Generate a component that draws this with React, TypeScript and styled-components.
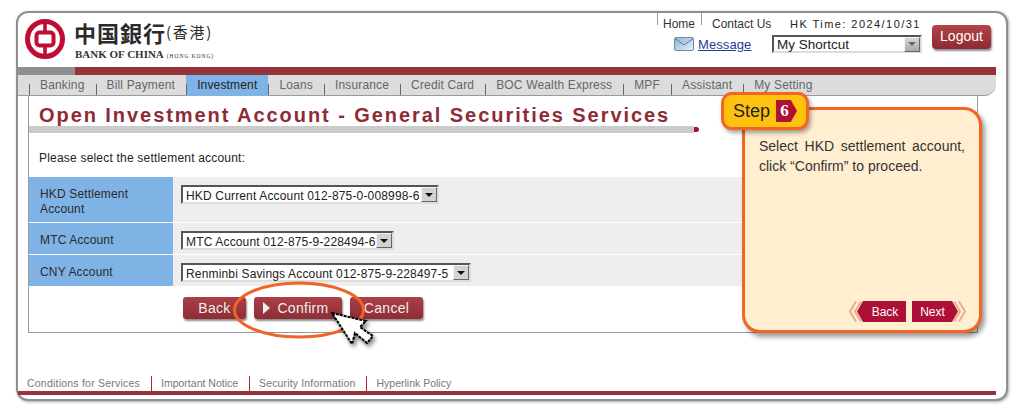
import React from 'react';
import styled, { createGlobalStyle } from 'styled-components';

const GlobalStyle = createGlobalStyle`
  html, body {
    margin: 0;
    padding: 0;
    background: #fff;
    font-family: "Liberation Sans", Arial, sans-serif;
  }
`;

const Page = styled.div`
  width: 1024px;
  height: 415px;
  padding: 11px 16px 14px;
  box-sizing: border-box;
  overflow: hidden;
`;

const Frame = styled.div`
  position: relative;
  height: 390px;
  box-sizing: border-box;
  border: 2px solid #8f8f8f;
  border-radius: 12px;
  box-shadow: 1px 1px 3px rgba(0, 0, 0, 0.35);
  display: flex;
  flex-direction: column;
  background: #fff;
`;

const Header = styled.header`
  height: 54px;
  padding-right: 16px;
  display: flex;
  flex-shrink: 0;
`;

const Brand = styled.div`
  display: flex;
  padding: 6px 0 0 7px;
  gap: 9px;
`;

const BrandText = styled.div`
  display: flex;
  flex-direction: column;
`;

const BrandChinese = styled.div`
  display: flex;
  align-items: center;
  height: 26px;
  color: #2b2b2b;
  font-family: "Noto Sans CJK TC", sans-serif;
  font-size: 22px;
  font-weight: 700;
  letter-spacing: 1px;
  line-height: 26px;
  white-space: nowrap;
`;

const BrandRegion = styled.span`
  font-size: 15px;
  font-weight: 400;
  letter-spacing: 1.75px;
`;

const BrandEnglish = styled.div`
  display: flex;
  align-items: baseline;
  gap: 3px;
  margin: 2px 0 0 1px;
  color: #333;
  font-family: "Liberation Serif", serif;
  font-size: 11px;
  font-weight: 700;
  line-height: 14px;
  white-space: nowrap;
`;

const BrandEnglishSmall = styled.span`
  font-size: 5.5px;
  font-weight: 400;
  letter-spacing: 0.95px;
`;

const HeaderRight = styled.div`
  margin-left: auto;
  width: 333px;
  display: flex;
`;

const Utility = styled.div`
  width: 274px;
  display: flex;
  flex-direction: column;
`;

const TopLinks = styled.div`
  display: flex;
  height: 22px;
`;

const TopLink = styled.a<{ $width: number; $indent: number }>`
  display: block;
  box-sizing: border-box;
  width: ${(p) => p.$width}px;
  height: 12px;
  padding: 4px 0 0 ${(p) => p.$indent}px;
  border-left: 1px solid #999;
  color: #333;
  font-size: 12px;
  line-height: 14px;
  white-space: nowrap;
`;

const Clock = styled.div`
  margin-left: 19px;
  padding-top: 4px;
  color: #222;
  font-size: 11px;
  line-height: 14px;
  letter-spacing: 1.45px;
  white-space: nowrap;
`;

const ToolRow = styled.div`
  display: flex;
  align-items: center;
  height: 18px;
`;

const MailIcon = styled.svg`
  margin-left: 17px;
  flex-shrink: 0;
`;

const MessageLink = styled.a`
  margin-left: 4px;
  width: 74px;
  color: #1c3f8f;
  font-size: 13px;
  letter-spacing: 0.1px;
  text-decoration: underline;
`;

const ComboBox = styled.div<{ $width: number; $height?: number }>`
  display: flex;
  align-items: center;
  box-sizing: border-box;
  width: ${(p) => p.$width}px;
  height: ${(p) => p.$height ?? 19}px;
  background: #fff;
  border: 2px solid;
  border-color: #555 #ddd #ddd #555;
  white-space: nowrap;
`;

const ComboText = styled.span<{ $shortcut?: boolean }>`
  flex: 1;
  padding: ${(p) => (p.$shortcut ? 1 : 3)}px 0 0 3px;
  color: #222;
  font-size: ${(p) => (p.$shortcut ? 13.5 : 12)}px;
  line-height: 14px;
  letter-spacing: ${(p) => (p.$shortcut ? 0 : 0.16)}px;
`;

const ComboArrow = styled.span<{ $grey?: boolean }>`
  display: flex;
  align-items: center;
  justify-content: center;
  width: 16px;
  height: 15px;
  flex-shrink: 0;
  box-sizing: border-box;
  background: ${(p) => (p.$grey ? 'linear-gradient(#d8d8d8, #a8a8a8)' : '#d6d3cc')};
  border: 1px solid;
  border-color: #f4f4f4 #666 #666 #f4f4f4;

  &::after {
    content: '';
    border-left: 4px solid transparent;
    border-right: 4px solid transparent;
    border-top: 4px solid ${(p) => (p.$grey ? '#666' : '#111')};
  }
`;

const LogoutSlot = styled.div`
  padding: 12px 0 0 10px;
`;

const LogoutButton = styled.button`
  display: block;
  width: 59px;
  height: 24px;
  padding: 0 0 3px;
  border: 0;
  border-radius: 4px;
  background: linear-gradient(#b24349, #8e2a32);
  box-shadow: 1px 2px 2px rgba(0, 0, 0, 0.45);
  color: #fff;
  font: 14px "Liberation Sans", Arial, sans-serif;
`;

const AccentBar = styled.div`
  display: grid;
  grid-template-columns: 57px 1fr;
  height: 8px;
  margin-right: 10px;
  flex-shrink: 0;
  background: #96323a;

  &::before {
    content: '';
    background: #8f8f8f;
  }
`;

const Nav = styled.nav`
  display: flex;
  height: 21px;
  box-sizing: border-box;
  margin-right: 10px;
  padding-left: 11px;
  flex-shrink: 0;
  background: #dcdcdc;
  border-bottom: 1px solid #9a9a9a;
  border-bottom-right-radius: 12px;
`;

const NavItem = styled.a<{ $active?: boolean }>`
  position: relative;
  padding: 0 11px;
  height: 21px;
  background: ${(p) => (p.$active ? '#7fb2e5' : 'transparent')};
  color: ${(p) => (p.$active ? '#222' : '#666')};
  font-size: 12px;
  line-height: 20px;
  letter-spacing: 0.16px;
  white-space: nowrap;

  &::before {
    content: '';
    position: absolute;
    left: 0;
    bottom: 1px;
    height: 11px;
    border-left: 1px solid #666;
  }
`;

const Panel = styled.main`
  height: 237px;
  width: 950px;
  box-sizing: border-box;
  margin-left: 10px;
  flex-shrink: 0;
  border: 1px solid #999;
  border-top: 0;
`;

const Title = styled.h1`
  margin: 0;
  height: 30px;
  padding-left: 10px;
  color: #8e2b36;
  font-size: 20px;
  font-weight: 700;
  line-height: 39px;
  letter-spacing: 1.94px;
  white-space: nowrap;
`;

const TitleRule = styled.div`
  display: flex;
  align-items: center;
  height: 7px;
  width: 670px;

  &::before {
    content: '';
    flex: 1;
    height: 7px;
    background: #cbcbcb;
  }

  &::after {
    content: '';
    width: 5px;
    height: 5px;
    border-radius: 0 3px 3px 0;
    background: #a5132f;
  }
`;

const Prompt = styled.p`
  margin: 0;
  height: 44px;
  box-sizing: border-box;
  padding: 18px 0 0 10px;
  color: #222;
  font-size: 12px;
  line-height: 14px;
  letter-spacing: 0.2px;
`;

const FormGrid = styled.div`
  display: grid;
  grid-template-columns: 144px 1fr;
  grid-template-rows: 45px 31px 31px;
  row-gap: 1px;
`;

const FieldLabel = styled.div`
  box-sizing: border-box;
  padding: 10px 10px 0 11px;
  background: #7fb2e5;
  color: #2c2c2c;
  font-size: 12px;
  line-height: 15px;
  letter-spacing: 0.15px;
`;

const FieldValue = styled.div`
  padding: 8px 0 0 8px;
  background: #eeeeee;
`;

const ButtonRow = styled.div`
  display: flex;
  gap: 8px;
  padding: 11px 0 0 154px;
`;

const ActionButton = styled.button<{ $width: number; $lead?: boolean }>`
  display: flex;
  align-items: center;
  justify-content: center;
  gap: 7px;
  width: ${(p) => p.$width}px;
  height: 22px;
  padding: 0 ${(p) => (p.$lead ? 4 : 0)}px 0 0;
  border: 0;
  border-radius: 3px;
  background: linear-gradient(#ac4047, #8e2c34);
  box-shadow: 1px 2px 2px rgba(0, 0, 0, 0.45);
  color: #eee;
  font: 14px "Liberation Sans", Arial, sans-serif;
  letter-spacing: 0.3px;
`;

const PlayMark = styled.span`
  border-top: 6px solid transparent;
  border-bottom: 6px solid transparent;
  border-left: 7px solid #eee;
`;

const Footer = styled.footer`
  margin: auto 10px 4px 0;
  border-bottom: 4px solid #96323a;
  padding-left: 9px;
  display: flex;
`;

const FooterLink = styled.a<{ $tracking: number }>`
  height: 15px;
  padding-right: 11px;
  margin-right: 9px;
  border-right: 1px solid #96323a;
  color: #777;
  font-size: 10.5px;
  line-height: 15px;
  letter-spacing: ${(p) => p.$tracking}px;
  white-space: nowrap;

  &:last-child {
    border-right: 0;
  }
`;

const Highlight = styled.svg`
  position: absolute;
  left: 214px;
  top: 267px;
`;

const Pointer = styled.svg`
  position: absolute;
  left: 313px;
  top: 299px;
  filter: drop-shadow(2px 3px 2px rgba(0, 0, 0, 0.5));
`;

const Callout = styled.aside`
  position: absolute;
  left: 724px;
  top: 94px;
  width: 240px;
  height: 226px;
  box-sizing: border-box;
  display: flex;
  flex-direction: column;
  padding: 26px 13px 8px 14px;
  background: #ffefd0;
  border: 3px solid #f26522;
  border-radius: 18px;
  box-shadow: 3px 4px 5px rgba(0, 0, 0, 0.4);
`;

const StepBadge = styled.div`
  position: absolute;
  left: -24px;
  top: -18px;
  width: 88px;
  height: 38px;
  box-sizing: border-box;
  display: flex;
  align-items: center;
  gap: 6px;
  padding-left: 9px;
  background: #ffc20e;
  border: 3px solid #f26522;
  border-radius: 11px;
  box-shadow: 2px 3px 4px rgba(0, 0, 0, 0.35);
  color: #222;
  font-size: 18px;
`;

const StepNumber = styled.span`
  width: 21px;
  height: 22px;
  padding-right: 4px;
  box-sizing: border-box;
  background: #ae0f36;
  clip-path: polygon(0 0, 70% 0, 100% 50%, 70% 100%, 0 100%);
  color: #fff;
  font-family: "Liberation Serif", serif;
  font-size: 17px;
  font-weight: 700;
  line-height: 22px;
  text-align: center;
`;

const CalloutText = styled.p`
  margin: 0;
  width: 206px;
  color: #333;
  font-size: 14px;
  line-height: 20px;
  text-align: justify;
`;

const GuideNav = styled.div`
  margin-top: auto;
  display: flex;
  justify-content: flex-end;
  align-items: center;
  gap: 6px;
`;

const GuideGroup = styled.div`
  display: flex;
  align-items: center;
`;

const GuideButton = styled.button<{ $dir: 'back' | 'next' }>`
  width: ${(p) => (p.$dir === 'back' ? 49 : 46)}px;
  height: 21px;
  margin: ${(p) => (p.$dir === 'back' ? '0 0 0 -5px' : '0 -5px 0 0')};
  padding: ${(p) => (p.$dir === 'back' ? '0 0 0 7px' : '0 5px 0 0')};
  border: 0;
  background: #ae0f36;
  clip-path: ${(p) =>
    p.$dir === 'back'
      ? 'polygon(6px 0, 100% 0, 100% 100%, 6px 100%, 0 50%)'
      : 'polygon(0 0, calc(100% - 6px) 0, 100% 50%, calc(100% - 6px) 100%, 0 100%)'};
  color: #fff;
  font: 12px "Liberation Sans", Arial, sans-serif;
`;

const Chevrons = styled.svg<{ $flip?: boolean }>`
  display: block;
  transform: ${(p) => (p.$flip ? 'scaleX(-1)' : 'none')};
`;

const navItems = [
  'Banking',
  'Bill Payment',
  'Investment',
  'Loans',
  'Insurance',
  'Credit Card',
  'BOC Wealth Express',
  'MPF',
  'Assistant',
  'My Setting',
];

const footerLinks = [
  { label: 'Conditions for Services', tracking: 0.22 },
  { label: 'Important Notice', tracking: 0 },
  { label: 'Security Information', tracking: 0.15 },
  { label: 'Hyperlink Policy', tracking: 0 },
];

const fields = [
  { label: 'HKD Settlement Account', value: 'HKD Current Account 012-875-0-008998-6', width: 258 },
  { label: 'MTC Account', value: 'MTC Account 012-875-9-228494-6', width: 213 },
  { label: 'CNY Account', value: 'Renminbi Savings Account 012-875-9-228497-5', width: 290 },
];

const BocLogo: React.FC = () => (
  <svg width="40" height="40" viewBox="0 0 40 40">
    <circle cx="20" cy="20" r="17.5" fill="none" stroke="#bf0d33" strokeWidth="5" />
    <rect x="11.5" y="13.5" width="17" height="13" rx="3" fill="none" stroke="#bf0d33" strokeWidth="4" />
    <rect x="18.2" y="2" width="3.6" height="11" fill="#bf0d33" />
    <rect x="18.2" y="27" width="3.6" height="11" fill="#bf0d33" />
  </svg>
);

const Envelope: React.FC = () => (
  <MailIcon width="20" height="14" viewBox="0 0 20 14">
    <defs>
      <linearGradient id="mail" x1="0" y1="0" x2="1" y2="1">
        <stop offset="0" stopColor="#8fb4d6" />
        <stop offset="1" stopColor="#e8f0f8" />
      </linearGradient>
    </defs>
    <rect x="0.5" y="0.5" width="19" height="13" rx="1.5" fill="url(#mail)" stroke="#6b8aa8" />
    <path d="M1 1.5 L10 8 L19 1.5" fill="none" stroke="#56789a" />
  </MailIcon>
);

const GuideChevrons: React.FC<{ flip?: boolean }> = ({ flip }) => (
  <Chevrons $flip={flip} width="13" height="21" viewBox="0 0 13 21">
    <path d="M7 0.5 L1 10.5 L7 20.5" fill="none" stroke="#e9ab94" strokeWidth="2" />
    <path d="M12 0.5 L6 10.5 L12 20.5" fill="none" stroke="#e9ab94" strokeWidth="2" />
  </Chevrons>
);

export default function App() {
  return (
    <Page>
      <GlobalStyle />
      <Frame>
        <Header>
          <Brand>
            <BocLogo />
            <BrandText>
              <BrandChinese>
                中国銀行<BrandRegion>(香港)</BrandRegion>
              </BrandChinese>
              <BrandEnglish>
                BANK OF CHINA<BrandEnglishSmall>(HONG KONG)</BrandEnglishSmall>
              </BrandEnglish>
            </BrandText>
          </Brand>
          <HeaderRight>
            <Utility>
              <TopLinks>
                <TopLink $width={44} $indent={5}>Home</TopLink>
                <TopLink $width={70} $indent={10}>Contact Us</TopLink>
                <Clock>HK Time: 2024/10/31</Clock>
              </TopLinks>
              <ToolRow>
                <Envelope />
                <MessageLink>Message</MessageLink>
                <ComboBox $width={150} $height={18}>
                  <ComboText $shortcut>My Shortcut</ComboText>
                  <ComboArrow $grey />
                </ComboBox>
              </ToolRow>
            </Utility>
            <LogoutSlot>
              <LogoutButton>Logout</LogoutButton>
            </LogoutSlot>
          </HeaderRight>
        </Header>
        <AccentBar />
        <Nav>
          {navItems.map((item) => (
            <NavItem key={item} $active={item === 'Investment'}>
              {item}
            </NavItem>
          ))}
        </Nav>
        <Panel>
          <Title>Open Investment Account - General Securities Services</Title>
          <TitleRule />
          <Prompt>Please select the settlement account:</Prompt>
          <FormGrid>
            {fields.map((field) => (
              <React.Fragment key={field.label}>
                <FieldLabel>{field.label}</FieldLabel>
                <FieldValue>
                  <ComboBox $width={field.width}>
                    <ComboText>{field.value}</ComboText>
                    <ComboArrow />
                  </ComboBox>
                </FieldValue>
              </React.Fragment>
            ))}
          </FormGrid>
          <ButtonRow>
            <ActionButton $width={63}>Back</ActionButton>
            <ActionButton $width={88} $lead>
              <PlayMark />
              Confirm
            </ActionButton>
            <ActionButton $width={73}>Cancel</ActionButton>
          </ButtonRow>
        </Panel>
        <Footer>
          {footerLinks.map((link) => (
            <FooterLink key={link.label} $tracking={link.tracking}>
              {link.label}
            </FooterLink>
          ))}
        </Footer>

        <Highlight width="134" height="60" viewBox="0 0 134 60">
          <ellipse cx="67" cy="30" rx="64.5" ry="27" fill="none" stroke="#ef6427" strokeWidth="3" />
        </Highlight>
        <Pointer width="46" height="36" viewBox="0 0 46 36">
          <path
            d="M1 1 L35 9 L29 15 L42 24 L36 31 L24 21 L21 32 Z"
            fill="#fff"
            stroke="#000"
            strokeWidth="2"
            strokeLinejoin="miter"
            strokeDasharray="3 1"
          />
        </Pointer>

        <Callout>
          <StepBadge>
            Step
            <StepNumber>6</StepNumber>
          </StepBadge>
          <CalloutText>Select HKD settlement account, click “Confirm” to proceed.</CalloutText>
          <GuideNav>
            <GuideGroup>
              <GuideChevrons />
              <GuideButton $dir="back">Back</GuideButton>
            </GuideGroup>
            <GuideGroup>
              <GuideButton $dir="next">Next</GuideButton>
              <GuideChevrons flip />
            </GuideGroup>
          </GuideNav>
        </Callout>
      </Frame>
    </Page>
  );
}
